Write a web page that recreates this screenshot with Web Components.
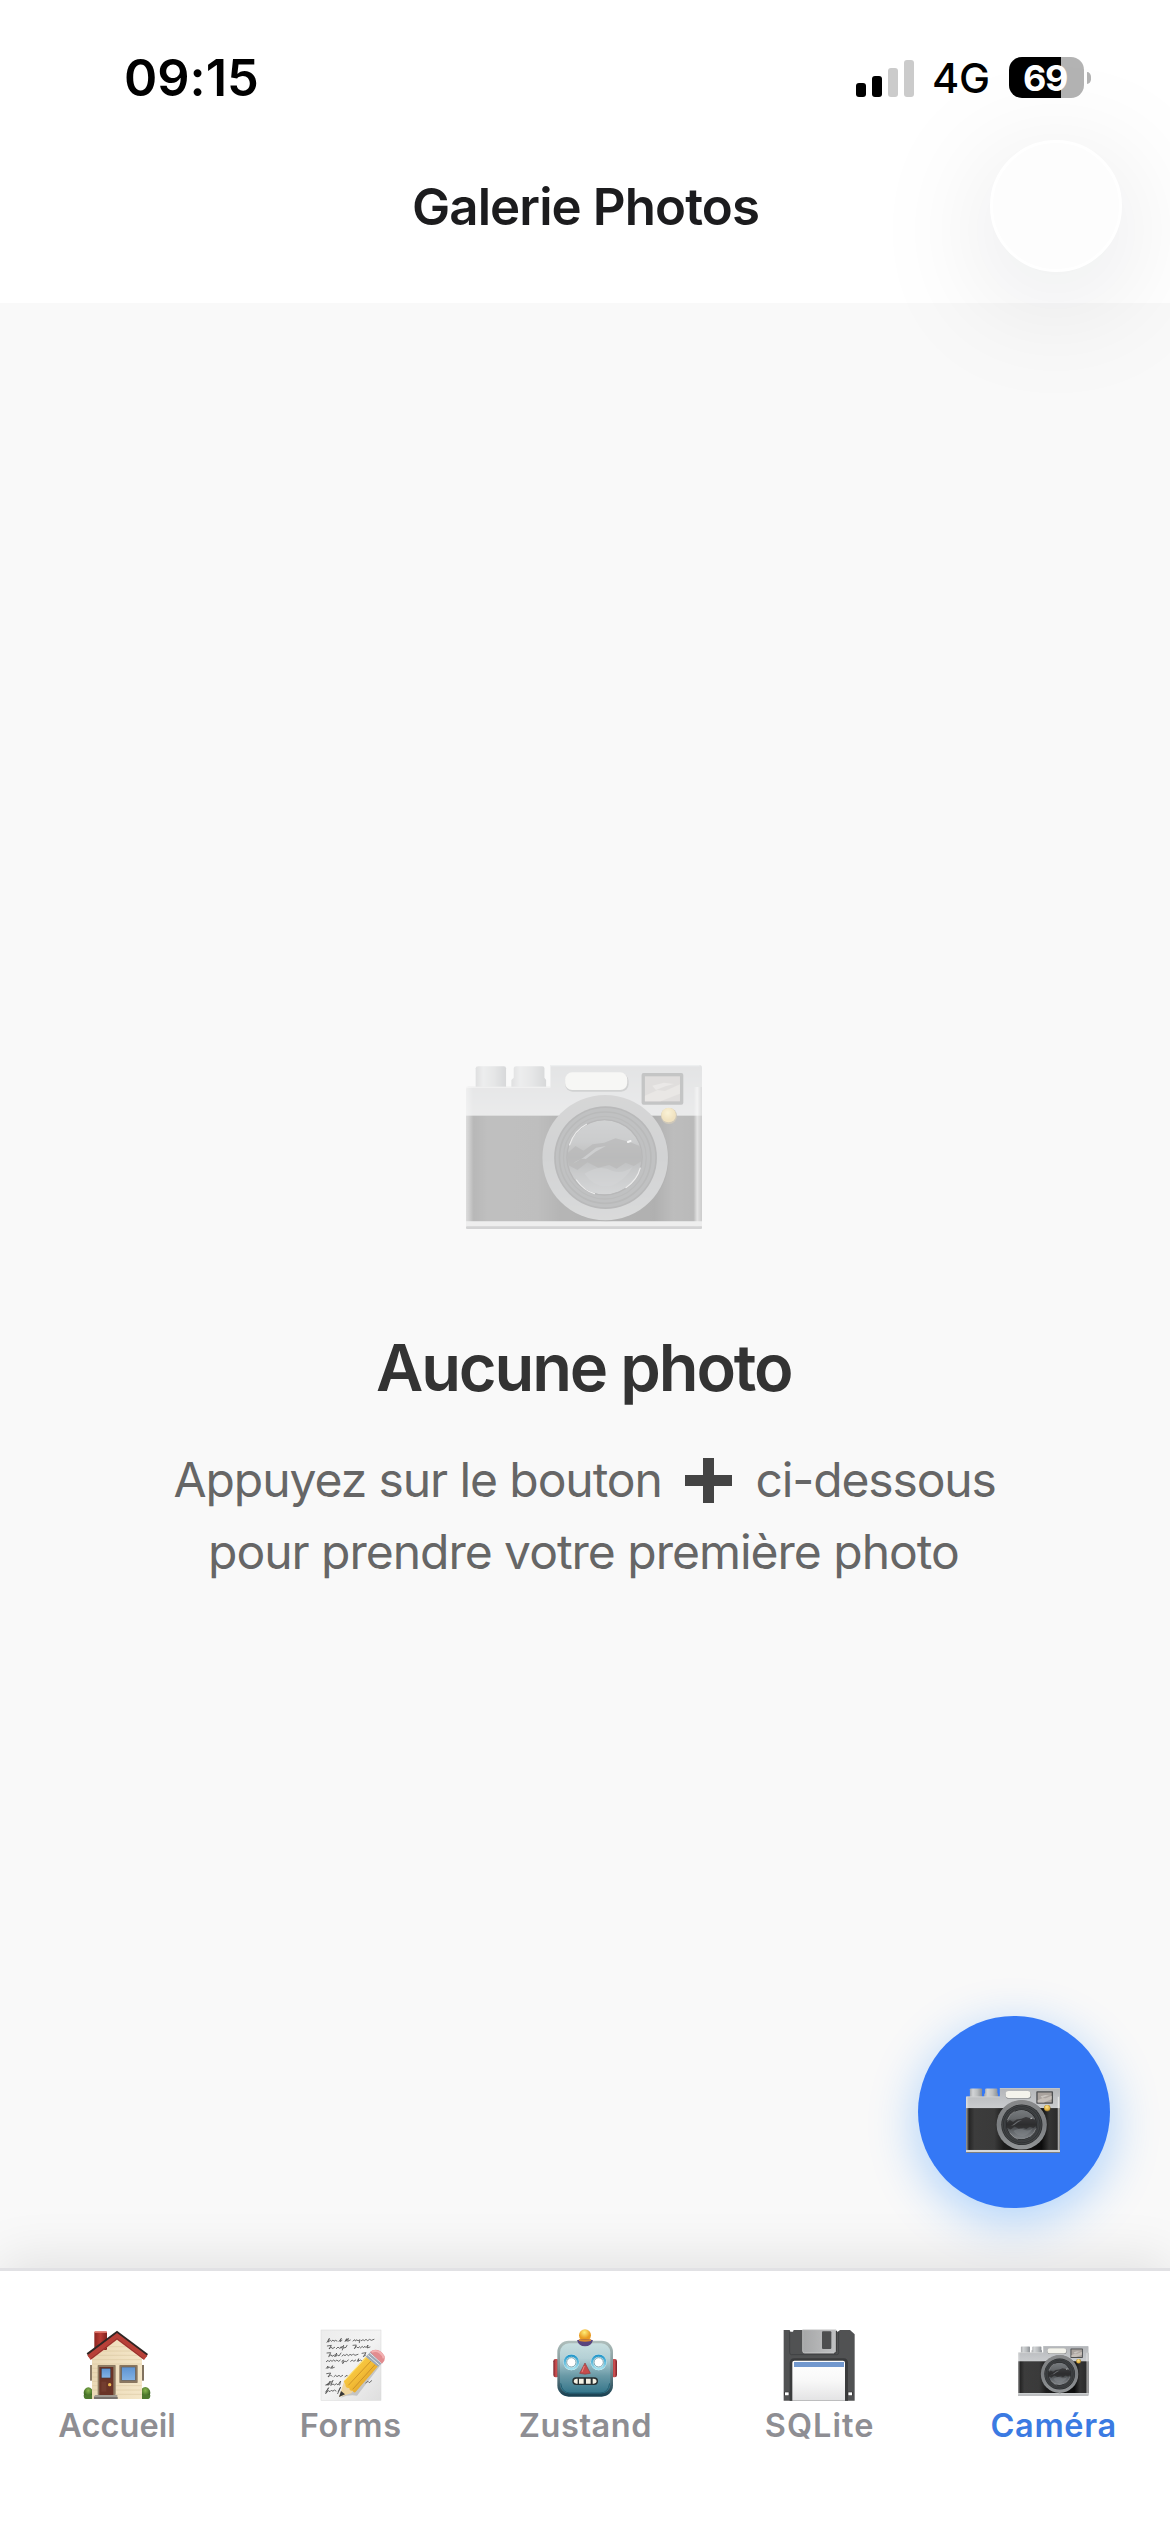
<!DOCTYPE html>
<html lang="fr">
<head>
<meta charset="utf-8">
<title>Galerie Photos</title>
<style>
html,body{margin:0;padding:0;background:#fff}
body{font-family:Inter,"Liberation Sans",sans-serif}
</style>
</head>
<body>
<photo-app></photo-app>
<script>
/* Text whose inked width is fixed: tracking is spread evenly between the letters. */
class FitText extends HTMLElement{
  connectedCallback(){
    if(this.shadowRoot)return;
    const root=this.attachShadow({mode:'open'});
    const size=+this.getAttribute('size'),wt=this.getAttribute('weight')||'400',w=+this.getAttribute('width'),lh=this.getAttribute('line')||Math.round(size*1.2);
    const t=this.textContent;
    const c=document.createElement('canvas').getContext('2d');
    c.font=`${wt} ${size}px Inter, "Liberation Sans", sans-serif`;
    const m=c.measureText(t);
    const ls=(w-(m.actualBoundingBoxLeft+m.actualBoundingBoxRight))/(t.length-1);
    root.innerHTML=`<style>:host{display:block;flex:none;width:${w}px;height:${lh}px;line-height:${lh}px;font-size:${size}px;font-weight:${wt};white-space:nowrap}
    span{display:inline-block;margin-left:${m.actualBoundingBoxLeft}px;letter-spacing:${ls}px}</style><span><slot></slot></span>`;
  }
}
customElements.define('fit-text',FitText);

function define(name,html){
  const tpl=document.createElement('template');tpl.innerHTML=html;
  customElements.define(name,class extends HTMLElement{
    constructor(){super();this.attachShadow({mode:'open'}).append(tpl.content.cloneNode(true));}
  });
}

define('camera-icon',`<style>:host{display:block;flex:none}svg{display:block;width:100%;height:100%}</style>
<svg viewBox="0 0 707 492" preserveAspectRatio="none">
<defs>
<linearGradient id="top" x1="0" y1="0" x2="0" y2="1"><stop offset="0" stop-color="#b3b5b8"/><stop offset=".35" stop-color="#cdcfd1"/><stop offset="1" stop-color="#cfd1d3"/></linearGradient>
<linearGradient id="side" x1="0" x2="1"><stop offset="0" stop-color="#fff" stop-opacity=".45"/><stop offset=".03" stop-color="#fff" stop-opacity="0"/><stop offset=".965" stop-color="#fff" stop-opacity="0"/><stop offset=".98" stop-color="#fff" stop-opacity=".6"/><stop offset="1" stop-color="#777" stop-opacity=".5"/></linearGradient>
<linearGradient id="body" x1="0" x2="1"><stop offset="0" stop-color="#4e4e4e"/><stop offset=".035" stop-color="#262626"/><stop offset=".09" stop-color="#3c3c3c"/><stop offset=".3" stop-color="#3a3a3a"/><stop offset=".4" stop-color="#1c1c1c"/><stop offset=".8" stop-color="#0c0c0c"/><stop offset=".88" stop-color="#353535"/><stop offset=".96" stop-color="#2c2c2c"/><stop offset="1" stop-color="#555"/></linearGradient>
<linearGradient id="knob" x1="0" x2="1"><stop offset="0" stop-color="#a6a8aa"/><stop offset=".25" stop-color="#d2d4d6"/><stop offset=".6" stop-color="#bbbec0"/><stop offset="1" stop-color="#8b8f94"/></linearGradient>
<linearGradient id="ring" x1="0" y1="0" x2="0" y2="1"><stop offset="0" stop-color="#88898a"/><stop offset=".5" stop-color="#7b7e81"/><stop offset="1" stop-color="#929597"/></linearGradient>
<linearGradient id="glass" x1="0" y1="0" x2="0" y2="1"><stop offset="0" stop-color="#777b7e"/><stop offset=".3" stop-color="#65686b"/><stop offset=".5" stop-color="#383a3c"/><stop offset=".72" stop-color="#606468"/><stop offset="1" stop-color="#85898d"/></linearGradient>
<radialGradient id="bulb" cx=".45" cy=".35"><stop offset="0" stop-color="#ffe48a"/><stop offset="1" stop-color="#dfb040"/></radialGradient>
<clipPath id="lens"><circle cx="415" cy="277" r="111"/></clipPath>
</defs>
<path d="M29 10q0-6 8-6h76q7 0 7 6v58H29z" fill="url(#knob)"/>
<path d="M143 10q0-6 8-6h77q7 0 7 6v28l5 7v23H136V45l7-7z" fill="url(#knob)"/>
<path d="M253 0H699q8 0 8 8V488H0V72q0-7 7-7H253z" fill="url(#top)"/>
<path d="M253 2H700" stroke="#d4dadd" stroke-width="4"/>
<path d="M2 67H253" stroke="#dedede" stroke-width="4"/>
<rect x="0" y="152" width="707" height="318" fill="url(#body)"/>
<path d="M0 66H707V488H0z" fill="url(#side)"/>
<rect y="469" width="707" height="15" fill="#d5d7d8"/><rect y="484" width="707" height="8" rx="3" fill="#7d7f81"/>
<rect x="297" y="26" width="190" height="54" rx="22" fill="#77797b"/>
<rect x="297" y="22" width="186" height="53" rx="21" fill="#f4f3ec"/>
<rect x="526" y="24" width="125" height="95" rx="6" fill="#4d4f51"/><rect x="536" y="34" width="105" height="75" fill="#aaa39e"/>
<path d="M536 92l38-17 22 3 45-20v28l-58 23h-47z" fill="#c5beb8"/><path d="M558 62l35-9 30 4-26 7-28 11z" fill="#c9c4bf"/>
<circle cx="420" cy="282" r="187" fill="#111" opacity=".7"/>
<circle cx="417" cy="278" r="188" fill="url(#ring)"/>
<circle cx="418" cy="278" r="154" fill="#282a2c"/>
<circle cx="418" cy="278" r="149" fill="#414446"/><circle cx="417" cy="278" r="137" fill="none" stroke="#292b2d" stroke-width="5"/><circle cx="416" cy="278" r="124" fill="none" stroke="#303234" stroke-width="4"/>
<circle cx="415" cy="277" r="115" fill="#252628"/>
<g clip-path="url(#lens)"><circle cx="415" cy="277" r="112" fill="url(#glass)"/>
<path d="M304 265l24-22 24 14 27-19 35-5 34-13 42 11 36 14v43l-23 15-25-10-27 18-22-11-33 8-32-16-30 23-27-14z" fill="#292a2b" opacity=".75"/>
<path d="M320 296q22-17 39-14l29-22 31-17-29 5-40 31z" fill="#6a6d70"/>
<path d="M355 326q45-29 84-8 29 10 60-12-23 41-63 56-50 10-81-36z" fill="#85898d" opacity=".45"/></g>
<path d="M310 240q15-44 51-62M331 345q23 33 54 41M479 368q34-23 43-59" fill="none" stroke="#cfcfcf" stroke-width="3.5" stroke-linecap="round"/>
<path d="M485 231l8-3" stroke="#eee" stroke-width="6" stroke-linecap="round"/>
<circle cx="608" cy="153" r="24" fill="#725b29"/><circle cx="607" cy="150" r="22" fill="url(#bulb)"/>
</svg>`);

define('house-icon',`<style>:host,svg{display:block;width:72px;height:72px}</style>
<svg viewBox="123 207 216 216"><defs>
<linearGradient id="w" x1="0" x2="1"><stop offset="0" stop-color="#ead9b6"/><stop offset="1" stop-color="#f4e6c8"/></linearGradient>
<linearGradient id="b" x1="0" y1="0" x2="0" y2="1"><stop offset="0" stop-color="#5d93d2"/><stop offset="1" stop-color="#83b2e4"/></linearGradient>
<radialGradient id="g" cx=".5" cy=".3"><stop offset="0" stop-color="#89b64f"/><stop offset="1" stop-color="#426c25"/></radialGradient>
<linearGradient id="c" x1="0" x2="1"><stop offset="0" stop-color="#8c241f"/><stop offset=".5" stop-color="#b93c34"/><stop offset="1" stop-color="#7d211d"/></linearGradient></defs>
<ellipse cx="145" cy="398" rx="14" ry="16" fill="url(#g)"/><ellipse cx="316" cy="398" rx="15" ry="17" fill="url(#g)"/><path d="M131 405q0 12 7 12h18v-12zM306 405v12h18q7 0 7-12z" fill="#4e792e"/>
<rect x="150" y="315" width="8" height="47" fill="#8b7b67"/><rect x="304" y="315" width="8" height="47" fill="#81725f"/>
<path d="M156 417V292L231 232L306 292V417z" fill="url(#w)"/>
<path d="M205 260h55M188 273h90M170 286h123M157 299h148M157 312h148M157 325h16M157 338h16M157 351h16M157 364h16M157 377h16M157 390h16M228 377h77M228 390h77M228 403h77" stroke="#d8c49d" stroke-width="1.6"/>
<rect x="163" y="215" width="38" height="55" rx="3" fill="url(#c)"/><rect x="163" y="214" width="38" height="5" rx="2" fill="#db7064"/>
<path d="M140 280L231 212L324 282L318 291L231 228L147 292z" fill="#302624"/>
<path d="M142 286L231 219L322 287L312 300L231 239L152 300z" fill="#b84038"/>
<path d="M153 296L231 236L310 296" fill="none" stroke="#7e2c28" stroke-width="2"/>
<rect x="173" y="315" width="54" height="90" rx="2" fill="#8d7b64"/><rect x="178" y="321" width="42" height="84" fill="#693326"/><rect x="183" y="324" width="30" height="31" fill="#473432"/><rect x="185" y="326" width="26" height="27" fill="url(#b)"/><rect x="184" y="365" width="15" height="30" fill="#733d2f"/><circle cx="209" cy="374" r="5" fill="#efbc54"/>
<rect x="238" y="315" width="55" height="54" rx="2" fill="#8a7760"/><rect x="245" y="321" width="41" height="40" fill="url(#b)" stroke="#675e55" stroke-width="2"/>
<path d="M166 405h66v12h-70v-8z" fill="#9f9991"/><path d="M162 411h71v6h-71z" fill="#77716c"/>
</svg>`);

define('memo-icon',`<style>:host,svg{display:block;width:72px;height:72px}</style>
<svg viewBox="105 207 216 216"><defs>
<linearGradient id="p" x1="0" y1="0" x2="1" y2="1"><stop offset="0" stop-color="#ececec"/><stop offset=".5" stop-color="#f3f3f3"/><stop offset="1" stop-color="#dedede"/></linearGradient>
<linearGradient id="y" x1="0" y1="0" x2="1" y2="1"><stop offset="0" stop-color="#ffdb56"/><stop offset=".5" stop-color="#f3bd36"/><stop offset="1" stop-color="#cf8c20"/></linearGradient></defs>
<rect x="123" y="210" width="180" height="211" fill="url(#p)" stroke="#d6d6d6" stroke-width="1.5"/>
<g fill="none" stroke="#4a4a4a" stroke-width="2.4" stroke-linejoin="round" stroke-linecap="round">
<path d="M141 247l7-12-3 11 6-5 3 3 5-4 3 4 4-3 5 2M177 244l7-9-4 10 6-4M195 244l5-8-2 8 7-9-2 9 8-4M219 243l5-4 2 4 5-4 3 4 6-4-2 9M244 242l5-3 4 3 5-4 5 4 6-4 5 3 8-3"/>
<path d="M142 258l12-2-7 11 7-6 3 5 7-4M169 266l5-5 4 4 6-5-1 5 8-9-4 14M190 264l8-2 3-6M219 256l10-1-6 11 7-6 4 4 5-4M241 264l6-5 3 4 5-4 3 4 6-8-2 9 8-3"/>
<path d="M141 279l11-1-6 12 7-6 3 5 7-4M164 290l6-11-3 10 6-4 4 3 6-9M186 288l5-4 4 3 5-4 6 4 4-4 6 3 4-4 5 4 9-3M246 280l12-2-8 12 7-5"/>
<path d="M139 305l5-4 3 4 5-4 4 3 5-4 5 4 4-4 6 4 5-4M185 305l5-5-2 11 6-8 5 2 6-5M212 304l5-4 4 4 6-4M232 304l4-8-2 8 7-4 5 3"/>
<path d="M139 325l5-7-1 7 5-4 4 4 6-8-3 8 8-3M140 341l12-2-8 12 8-6 4 4M162 350l5-4 4 4 6-4 5 4 6-4M195 350l6-4 4 4 6-4"/>
<path d="M137 375l8-4-4 5 10-13-6 13 9-10 5-5-7 15 7-4 5 3 5-4 5 4 8-12-3 12M137 396l9-13-9 18 8-9 5 3 5-5 3 4 5-4 5 3M175 394l7-13-9 20"/>
<path d="M257 369l7-5 4 4 7-6"/></g>
<path d="M182 413l90-75 36-31-77 100q-24-4-49 6" fill="#888" opacity=".38"/>
<path d="M177 411L192 365L222 389L214 400z" fill="#eed5a0"/>
<path d="M177 411l6-18 12 10z" fill="#373737"/>
<path d="M191 364L257 290L294 319L226 397q-6 2-8-5-10 2-10-8-13 1-12-11z" fill="url(#y)"/>
<path d="M205 376L273 303M218 388L286 313" stroke="#bc7e20" stroke-width="2"/><path d="M194 361L259 291" stroke="#ffea8b" stroke-width="3"/>
<path d="M257 290L272 275L308 307L294 320z" fill="#9ea8b4"/><path d="M263 285l36 31M269 279l36 31" stroke="#e5eaef" stroke-width="3"/>
<path d="M270 276q13-12 30-3 19 13 13 29l-7 9z" fill="#e28c8f"/><path d="M275 276q12-7 24 1 11 8 12 18" fill="none" stroke="#f3b1b2" stroke-width="6"/>
</svg>`);

define('robot-icon',`<style>:host,svg{display:block;width:72px;height:72px}</style>
<svg viewBox="147 207 216 216"><defs>
<linearGradient id="f" x1="0" y1="0" x2="0" y2="1"><stop offset="0" stop-color="#c7dedf"/><stop offset=".3" stop-color="#b4d0d5"/><stop offset=".65" stop-color="#6999a6"/><stop offset="1" stop-color="#34758a"/></linearGradient>
<linearGradient id="o" x1="0" y1="0" x2="0" y2="1"><stop offset="0" stop-color="#b0bfbc"/><stop offset=".5" stop-color="#789094"/><stop offset="1" stop-color="#173f50"/></linearGradient>
<linearGradient id="r" x1="0" x2="1"><stop offset="0" stop-color="#751f27"/><stop offset=".5" stop-color="#d55454"/><stop offset="1" stop-color="#751f27"/></linearGradient>
<radialGradient id="a" cx=".45" cy=".25"><stop offset="0" stop-color="#ffee78"/><stop offset="1" stop-color="#e99b22"/></radialGradient>
<linearGradient id="e" x1="0" y1="0" x2="0" y2="1"><stop offset="0" stop-color="#2698ca"/><stop offset="1" stop-color="#a2e1ef"/></linearGradient></defs>
<rect x="160" y="297" width="17" height="55" rx="7" fill="url(#r)"/><rect x="334" y="297" width="17" height="55" rx="7" fill="url(#r)"/>
<rect x="172" y="242" width="167" height="168" rx="34" fill="url(#o)"/><rect x="180" y="250" width="151" height="150" rx="27" fill="url(#f)"/>
<path d="M182 370q4 29 29 29h89q25 0 29-29" fill="none" stroke="#225f73" stroke-width="3"/>
<circle cx="255" cy="226" r="18" fill="url(#a)"/><path d="M231 241q24-8 48 0-5 18-24 18t-24-18" fill="#59447d"/><path d="M237 238h36v5q-18 4-36 0z" fill="#d9892e"/>
<g><circle cx="214" cy="307" r="24" fill="#edf7f8"/><circle cx="214" cy="307" r="20" fill="none" stroke="url(#e)" stroke-width="7"/><circle cx="214" cy="307" r="14" fill="#fff" stroke="#578e9d" stroke-width="2.5"/><circle cx="296" cy="307" r="24" fill="#edf7f8"/><circle cx="296" cy="307" r="20" fill="none" stroke="url(#e)" stroke-width="7"/><circle cx="296" cy="307" r="14" fill="#fff" stroke="#578e9d" stroke-width="2.5"/></g>
<path d="M255 309L271 340q-16 5-32 0z" fill="#c64c4b" stroke="#943c40" stroke-width="2" stroke-linejoin="round"/><path d="M253 318l-7 18" stroke="#ed8580" stroke-width="3"/>
<rect x="217" y="352" width="77" height="23" rx="11" fill="#272f31"/><path d="M229 356h4v15h-4q-8-1-8-7 0-7 8-8zM237 356h14v15h-14zM258 356h14v15h-14zM278 356h4q8 1 8 8 0 6-8 7h-4z" fill="#f5f1e3"/>
</svg>`);

define('floppy-icon',`<style>:host,svg{display:block;width:72px;height:72px}</style>
<svg viewBox="129 207 216 216"><defs>
<linearGradient id="m" x1="0" y1="0" x2="1" y2="0"><stop offset="0" stop-color="#a6a7a8"/><stop offset="1" stop-color="#c0c1c2"/></linearGradient>
<linearGradient id="l" x1="0" y1="0" x2="0" y2="1"><stop offset="0" stop-color="#fff"/><stop offset=".5" stop-color="#f8f8f8"/><stop offset="1" stop-color="#e3e3e4"/></linearGradient></defs>
<path d="M131 210h18l2 5h8l2-5h127l5 6 7-6h30l14 13v199H131z" fill="#515253"/>
<path d="M149 215v63q0 6 6 6h135q6 0 6-6v-63" fill="none" stroke="#414243" stroke-width="3"/>
<path d="M149 422V310q0-15 14-15h148q13 0 13 15v112" fill="#3a3b3c"/>
<path d="M188 209h100v64q0 6-6 6h-88q-6 0-6-6z" fill="url(#m)" stroke="#d8d8d8" stroke-width="2"/><path d="M289 213v61q0 6-7 6" stroke="#333" stroke-width="3" fill="none"/><rect x="246" y="214" width="28" height="53" rx="3" fill="#4d4e4f"/>
<path d="M157 422V308q0-6 6-6h146q6 0 6 6v114z" fill="url(#l)"/><rect x="162" y="306" width="150" height="15" fill="#7298ce"/>
<rect x="133" y="395" width="15" height="12" rx="2" fill="#303030"/><rect x="322" y="395" width="16" height="12" rx="2" fill="#303030"/><rect x="135" y="397" width="11" height="9" fill="#fff"/><rect x="325" y="397" width="11" height="9" fill="#fff"/>
</svg>`);

define('status-bar',`<style>
:host{display:flex;box-sizing:border-box;height:141px;padding:14px 79px 0 126px;justify-content:space-between;align-items:center;color:#000;background:#fff}
.r{display:flex;align-items:center;height:42px}
.sig{display:flex;align-items:flex-end;gap:6px;height:38px;margin-right:20px}
.sig i{width:10px;border-radius:3px;background:#000}.sig .o{background:#cbcbcb}
.bat{display:flex;align-items:center;justify-content:center;width:75px;height:41px;box-sizing:border-box;padding-right:2px;border-radius:13px;background:linear-gradient(90deg,#000 52px,#b3b3b3 52px);color:#fff;margin-left:21px}
.nub{width:4px;height:12px;margin-left:3px;border-radius:0 5px 5px 0/0 6px 6px 0;background:#b3b3b3}
</style>
<fit-text size="50.5" weight="600" width="131" line="62">09:15</fit-text>
<div class="r"><div class="sig"><i style="height:14px"></i><i style="height:21px"></i><i class="o" style="height:29px"></i><i class="o" style="height:37px"></i></div>
<fit-text size="41.5" weight="500" width="54" line="42">4G</fit-text>
<div class="bat"><fit-text size="36" weight="700" width="43" line="40">69</fit-text></div><div class="nub"></div></div>`);

define('app-header',`<style>
:host{display:grid;grid-template-columns:1fr auto 1fr;align-items:start;height:162px;box-sizing:border-box;position:relative;z-index:1;color:#1c1c1e;background:#fff}
fit-text{margin:35px 0 0 2px}
.b{justify-self:end;box-sizing:border-box;width:132px;height:132px;margin:-1px 48px 0 0;border:3px solid #fff;border-radius:50%;background:#fdfdfd;box-shadow:0 24px 126px rgba(10,20,30,.13)}
</style><span></span><fit-text size="51" weight="600" width="344" line="62">Galerie Photos</fit-text><div class="b"></div>`);

define('empty-state',`<style>
:host{display:flex;flex-direction:column;align-items:center;padding-top:762px;color:#666}
camera-icon{width:236px;height:164px;opacity:.3;margin-right:3px}
.t{margin:99px 2px 36px 0;color:#333}
.l{display:flex;align-items:center;height:72px;margin-right:1px}
svg{display:block;width:47px;height:45px;margin:0 26px 0 25px}
</style><camera-icon></camera-icon>
<fit-text class="t" size="65" weight="600" width="414" line="80">Aucune photo</fit-text>
<div class="l"><fit-text size="48" width="485" line="72">Appuyez sur le bouton</fit-text>
<svg viewBox="0 0 47 45"><path d="M18 0h11v17h18v11H29v17H18V28H0V17h18z" fill="#444"/></svg>
<fit-text size="48" width="237" line="72">ci-dessous</fit-text></div>
<div class="l"><fit-text size="48" width="747" line="72">pour prendre votre première photo</fit-text></div>`);

define('fab-button',`<style>
:host{display:flex;align-items:center;justify-content:center;width:192px;height:192px;border-radius:50%;background:#3478f6;box-shadow:0 12px 50px rgba(0,122,255,.32)}
camera-icon{width:94.5px;height:65px;margin:16px 2px 0 0}
</style><camera-icon></camera-icon>`);

define('tab-item',`<style>
:host{display:flex;flex:1;flex-direction:column;align-items:center;gap:5px;color:#8e8e93}
:host([active]){color:#3b7ae2}
.i{width:72px;height:72px;display:flex}
</style><div class="i"><slot name="icon"></slot></div><slot></slot>`);

define('tab-bar',`<style>
:host{display:flex;box-sizing:border-box;height:264px;padding-top:58px;border-top:3px solid #e1e1e4;background:#fff;position:relative;z-index:2;box-shadow:0 -8px 50px rgba(0,0,0,.1)}
</style><slot></slot>`);

define('photo-app',`<style>
:host{display:flex;flex-direction:column;width:1170px;height:2532px;overflow:hidden;background:#fff}
main{position:relative;flex:1;background:#f9f9f9}
fab-button{position:absolute;right:60px;bottom:60px}
.cam{width:70.5px;height:49.5px;margin:17px 0 0 1px}
.first{margin-right:1.5px}
</style>
<status-bar></status-bar><app-header></app-header>
<main><empty-state></empty-state><fab-button></fab-button></main>
<tab-bar>
<tab-item><house-icon slot="icon"></house-icon><fit-text class="first" size="32.5" weight="600" width="116" line="40">Accueil</fit-text></tab-item>
<tab-item><memo-icon slot="icon"></memo-icon><fit-text size="32.5" weight="600" width="98.5" line="40">Forms</fit-text></tab-item>
<tab-item><robot-icon slot="icon"></robot-icon><fit-text size="32.5" weight="600" width="130.5" line="40">Zustand</fit-text></tab-item>
<tab-item><floppy-icon slot="icon"></floppy-icon><fit-text size="32.5" weight="600" width="106.5" line="40">SQLite</fit-text></tab-item>
<tab-item active><camera-icon class="cam" slot="icon"></camera-icon><fit-text size="32.5" weight="600" width="123" line="40">Caméra</fit-text></tab-item>
</tab-bar>`);
</script>
</body>
</html>
